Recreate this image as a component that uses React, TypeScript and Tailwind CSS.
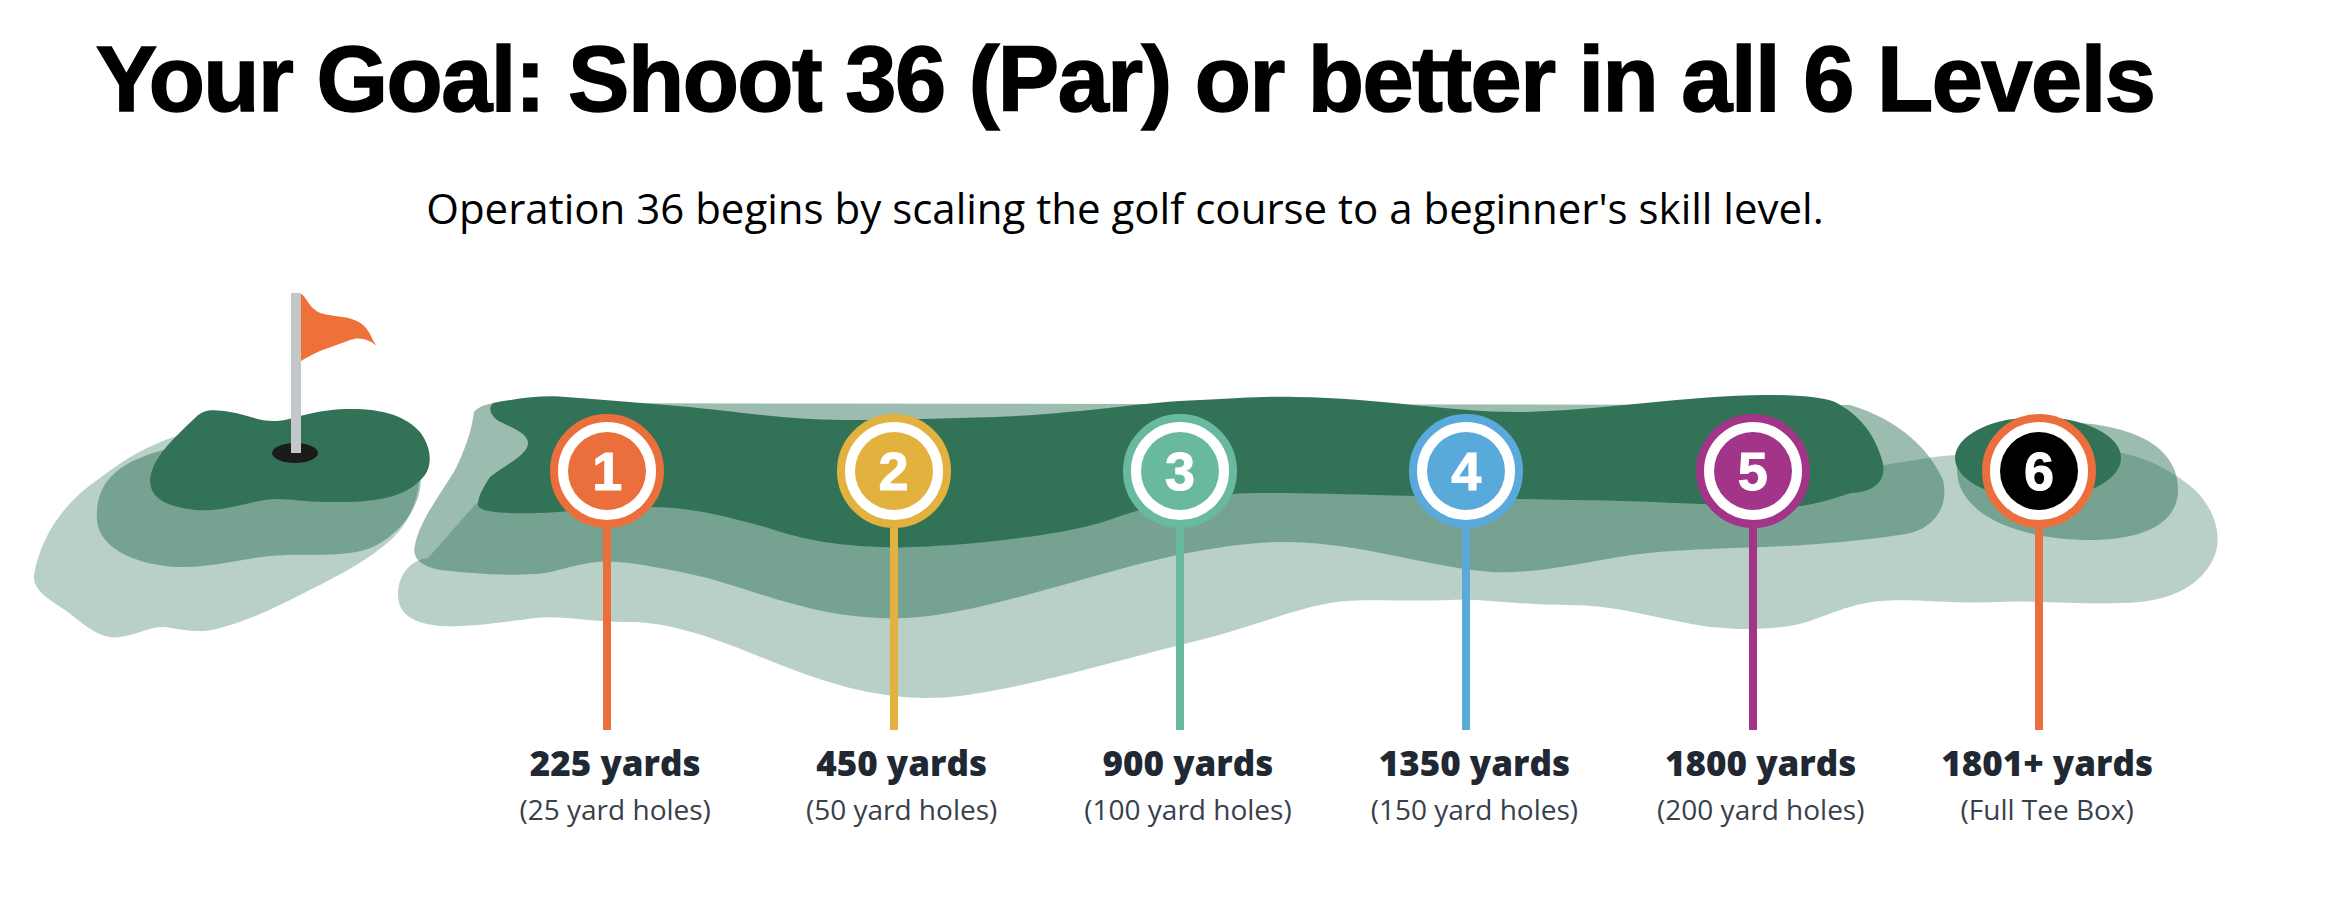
import * as React from "react";

const levels = [
  { n: "1", color: "bg-[#ea6f3d]", yards: "225 yards", note: "(25 yard holes)", inner: "bg-[#ea6f3d]", ring: "border-[#ea6f3d]" },
  { n: "2", color: "bg-[#e2b13e]", yards: "450 yards", note: "(50 yard holes)", inner: "bg-[#e2b13e]", ring: "border-[#e2b13e]" },
  { n: "3", color: "bg-[#69b9a0]", yards: "900 yards", note: "(100 yard holes)", inner: "bg-[#69b9a0]", ring: "border-[#69b9a0]" },
  { n: "4", color: "bg-[#5aa9db]", yards: "1350 yards", note: "(150 yard holes)", inner: "bg-[#5aa9db]", ring: "border-[#5aa9db]" },
  { n: "5", color: "bg-[#a2348a]", yards: "1800 yards", note: "(200 yard holes)", inner: "bg-[#a2348a]", ring: "border-[#a2348a]" },
  { n: "6", color: "bg-[#ea6f3d]", yards: "1801+ yards", note: "(Full Tee Box)", inner: "bg-black", ring: "border-[#ea6f3d]" },
];

function Course() {
  return (
    <svg
      className="absolute left-0 top-0"
      width={2327}
      height={440}
      viewBox="0 280 2327 440"
    >
      {/* green + flag */}
      <path
        fill="#2a7155"
        fillOpacity={0.33}
        d="M34,575 C40,540 60,505 100,478 C130,455 160,438 200,430 L420,460 C420,500 410,525 385,545 C360,565 330,580 300,595 C270,610 250,620 220,628 C200,634 185,630 165,627 C150,626 140,634 120,637 C100,640 85,625 65,610 C50,600 32,590 34,575 Z"
      />
      <path
        fill="#2a7155"
        fillOpacity={0.47}
        d="M97,520 C95,490 110,470 140,458 C170,446 200,440 260,440 L420,470 C425,500 405,530 375,546 C345,560 305,552 270,556 C240,559 210,568 180,567 C140,566 99,550 97,520 Z"
      />
      <path
        fill="#327358"
        d="M150,480 C152,458 172,440 195,418 C205,408 215,410 230,412 C250,415 262,424 285,420 C305,415 320,410 345,409 C380,408 405,415 420,432 C432,448 432,465 425,475 C415,488 400,495 385,498 C360,503 345,502 325,502 C300,502 285,497 265,500 C240,504 220,512 195,510 C170,507 150,500 150,480 Z"
      />
      <ellipse cx={295} cy={453} rx={23} ry={10} fill="#1b1b1b" />
      <rect x={291} y={293} width={10} height={160} fill="#c4c7ca" />
      <path
        fill="#ee7139"
        d="M301,294 C306,296 308,306 318,312 C330,318 355,314 366,328 C371,334 373,342 377,346 C370,340 360,336 350,340 C335,346 318,350 301,361 Z"
      />

      {/* fairway + tee */}
      <path
        fill="#2a7155"
        fillOpacity={0.33}
        d="M398,595 C398,575 410,560 428,558 C445,540 460,520 480,500 C520,470 560,470 600,470 L1850,470 C1890,465 1930,456 1957,455 C2000,450 2030,448 2060,448 C2120,446 2160,460 2195,490 C2215,510 2222,535 2215,555 C2205,580 2180,598 2140,602 C2090,606 2050,600 2000,602 C1950,604 1910,598 1880,601 C1845,604 1820,620 1795,625 C1770,630 1740,630 1710,627 C1660,620 1620,605 1570,605 C1520,605 1480,598 1450,600 C1400,602 1360,598 1330,603 C1290,610 1250,628 1200,640 C1100,665 1010,692 950,697 C910,700 880,695 850,688 C800,675 770,660 730,645 C690,630 660,622 627,622 C590,622 560,615 536,618 C510,621 470,628 440,626 C410,623 398,612 398,595 Z"
      />
      <path
        fill="#2a7155"
        fillOpacity={0.47}
        d="M474,412 C480,405 490,403 500,403 L1850,405 C1900,420 1930,450 1943,480 C1950,510 1930,530 1906,534 C1870,540 1830,543 1804,545 C1760,548 1700,548 1648,553 C1600,558 1540,575 1491,572 C1440,568 1380,550 1330,545 C1290,540 1260,542 1230,546 C1150,556 1060,588 995,603 C950,614 915,620 880,618 C840,616 815,610 790,603 C750,592 720,580 690,574 C650,566 620,560 597,562 C570,565 555,573 536,574 C500,576 470,573 440,570 C418,566 412,556 415,545 C420,520 440,495 455,470 C465,450 472,430 474,412 Z"
      />
      <path
        fill="#327358"
        d="M493,403 C520,398 545,395 566,397 C610,400 650,404 689,407 C740,412 790,420 842,420 C900,420 950,418 995,417 C1080,414 1140,402 1200,400 C1240,398 1270,396 1296,397 C1380,398 1450,412 1515,412 C1590,412 1690,395 1765,395 C1800,395 1820,397 1835,402 C1860,415 1875,435 1882,460 C1888,480 1875,492 1851,493 C1830,500 1810,506 1789,507 C1720,506 1640,500 1570,500 C1450,498 1350,493 1256,493 C1200,494 1150,505 1109,520 C1060,538 920,550 880,547 C820,545 790,535 765,527 C720,515 690,507 650,507 C610,507 570,512 536,513 C505,514 478,512 478,505 C478,495 485,485 490,477 C505,465 528,455 528,443 C528,432 505,425 497,420 C490,414 488,408 493,403 Z"
      />
      <path
        fill="#2a7155"
        fillOpacity={0.47}
        d="M1957,470 C1957,435 1995,423 2050,422 C2120,421 2178,440 2178,490 C2178,525 2140,540 2090,540 C2020,540 1957,515 1957,470 Z"
      />
      <ellipse cx={2038} cy={458} rx={83} ry={41} fill="#327358" />
    </svg>
  );
}

export default function App() {
  return (
    <div className="relative w-[2327px] h-[918px] bg-white overflow-hidden font-['Open_Sans',sans-serif]">
      {/* heading */}
      <div className="w-[2250px] text-center pt-[33px]">
        <h1 className="font-['Liberation_Sans',Arial,sans-serif] font-bold text-[92px] leading-none tracking-[-1.5px] text-black [-webkit-text-stroke:1.5px_black]">
          Your Goal: Shoot 36 (Par) or better in all 6 Levels
        </h1>
        <p className="mt-[62px] text-[42px] leading-none text-black">
          Operation 36 begins by scaling the golf course to a beginner's skill level.
        </p>
      </div>

      {/* course */}
      <div className="relative mt-[51px]">
        <Course />
        <div className="relative grid grid-cols-[repeat(6,286.4px)] pl-[464px] pt-[134px]">
          {levels.map((l) => (
            <div key={l.n} className="flex flex-col items-center">
              <div className={`w-[114px] h-[114px] rounded-full border-[8px] ${l.ring} bg-white p-[10px]`}>
                <div className={`w-full h-full rounded-full ${l.inner} flex items-center justify-center`}>
                  <span className="font-['Liberation_Sans',Arial,sans-serif] font-bold text-[54px] leading-none text-white [-webkit-text-stroke:1px_white]">
                    {l.n}
                  </span>
                </div>
              </div>
              <div className={`w-[8px] h-[202px] ${l.color}`} />
              <div className="mt-[15px] ml-[16px] whitespace-nowrap text-[35px] leading-none font-extrabold text-[#1f2833]">
                {l.yards}
              </div>
              <div className="mt-[15px] ml-[16px] whitespace-nowrap text-[28px] leading-none text-[#37404b]">
                {l.note}
              </div>
            </div>
          ))}
        </div>
      </div>
    </div>
  );
}
